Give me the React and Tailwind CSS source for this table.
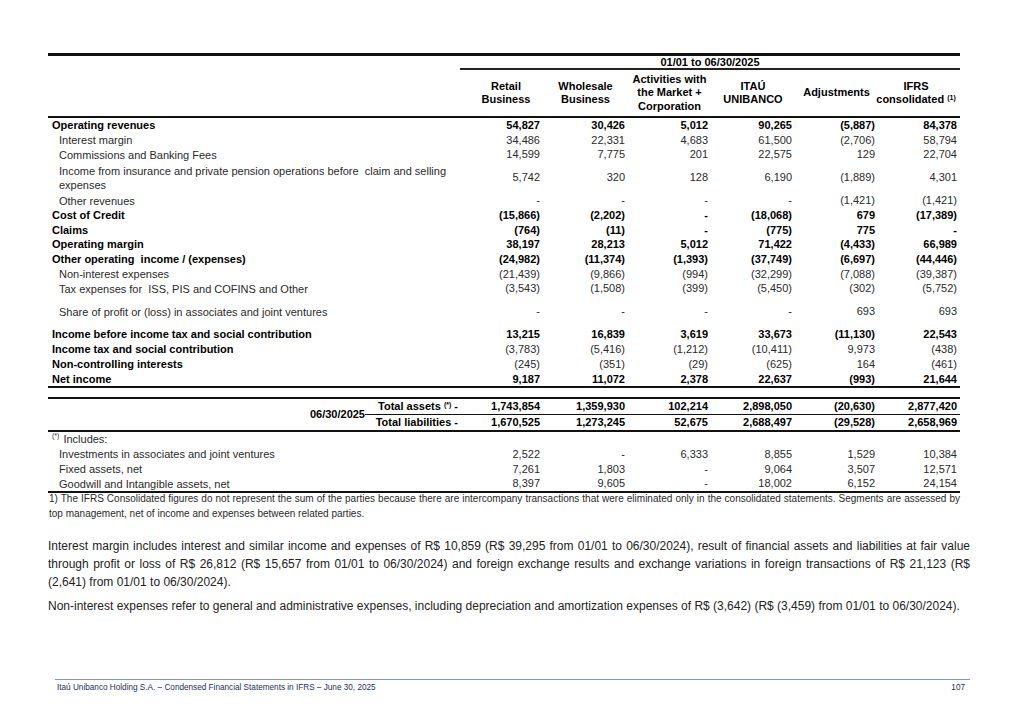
import React from "react";

const G = "grid grid-cols-[412px_83px_85px_83px_84px_83px_82px]";
const G2 = "grid grid-cols-[95px_83px_85px_83px_84px_83px_82px]";

const rows = [
  { l: "Operating revenues", b: true, v: ["54,827", "30,426", "5,012", "90,265", "(5,887)", "84,378"] },
  { l: "Interest margin", v: ["34,486", "22,331", "4,683", "61,500", "(2,706)", "58,794"] },
  { l: "Commissions and Banking Fees", v: ["14,599", "7,775", "201", "22,575", "129", "22,704"] },
  {
    l: (
      <>
        Income from insurance and private pension operations before&nbsp; claim and selling
        <br />
        expenses
      </>
    ),
    tall: true,
    v: ["5,742", "320", "128", "6,190", "(1,889)", "4,301"],
  },
  { l: "Other revenues", v: ["-", "-", "-", "-", "(1,421)", "(1,421)"] },
  { l: "Cost of Credit", b: true, v: ["(15,866)", "(2,202)", "-", "(18,068)", "679", "(17,389)"] },
  { l: "Claims", b: true, v: ["(764)", "(11)", "-", "(775)", "775", "-"] },
  { l: "Operating margin", b: true, v: ["38,197", "28,213", "5,012", "71,422", "(4,433)", "66,989"] },
  { l: "Other operating\u00a0 income / (expenses)", b: true, v: ["(24,982)", "(11,374)", "(1,393)", "(37,749)", "(6,697)", "(44,446)"] },
  { l: "Non-interest expenses", v: ["(21,439)", "(9,866)", "(994)", "(32,299)", "(7,088)", "(39,387)"] },
  { l: "Tax expenses for\u00a0 ISS, PIS and COFINS and Other", v: ["(3,543)", "(1,508)", "(399)", "(5,450)", "(302)", "(5,752)"] },
  { l: "Share of profit or (loss) in associates and joint ventures", tall: true, v: ["-", "-", "-", "-", "693", "693"] },
  { l: "Income before income tax and social contribution", b: true, v: ["13,215", "16,839", "3,619", "33,673", "(11,130)", "22,543"] },
  { l: "Income tax and social contribution", b: true, nb: true, v: ["(3,783)", "(5,416)", "(1,212)", "(10,411)", "9,973", "(438)"] },
  { l: "Non-controlling interests", b: true, nb: true, v: ["(245)", "(351)", "(29)", "(625)", "164", "(461)"] },
  { l: "Net income", b: true, v: ["9,187", "11,072", "2,378", "22,637", "(993)", "21,644"] },
];

const includes = [
  { l: "Investments in associates and joint ventures", v: ["2,522", "-", "6,333", "8,855", "1,529", "10,384"] },
  { l: "Fixed assets, net", v: ["7,261", "1,803", "-", "9,064", "3,507", "12,571"] },
  { l: "Goodwill and Intangible assets, net", v: ["8,397", "9,605", "-", "18,002", "6,152", "24,154"] },
];

function Row({ r }) {
  const h = r.tall ? "h-[31.3px]" : "h-[14.7px]";
  const labelCls = r.b ? "pl-[4px] font-bold text-black" : "pl-[11px] leading-[14px]";
  const numCls = r.b && !r.nb ? "font-bold text-black" : "";
  return (
    <div className={`${G} ${h} items-center`}>
      <div className={labelCls}>{r.l}</div>
      {r.v.map((x, i) => (
        <div key={i} className={`text-right pr-[3px] ${numCls}`}>
          {x}
        </div>
      ))}
    </div>
  );
}

export default function App() {
  return (
    <div className="w-[1019px] h-[720px] bg-white flex flex-col overflow-hidden font-['Liberation_Sans',Arial,sans-serif] text-[#2a2a2a]">
      <div className="pt-[53px] pl-[48px] text-[11px] leading-[14.7px]">
        <div className="w-[912px]">
          <div className="h-[3px] bg-[#111]" />
          <div className="grid grid-cols-[412px_500px]">
            <div />
            <div className="h-[14px] leading-[12px] border-b-2 border-[#222] text-center font-bold text-black">
              01/01 to 06/30/2025
            </div>
          </div>
          <div className={`${G} h-[48px] items-center border-b-2 border-[#111] font-bold text-black leading-[13.5px] text-center`}>
            <div />
            <div className="pl-[9px]">
              Retail
              <br />
              Business
            </div>
            <div>
              Wholesale
              <br />
              Business
            </div>
            <div>
              Activities with
              <br />
              the Market +
              <br />
              Corporation
            </div>
            <div>
              ITAÚ
              <br />
              UNIBANCO
            </div>
            <div>Adjustments</div>
            <div className="whitespace-nowrap -ml-[6px]">
              IFRS
              <br />
              consolidated <sup className="text-[7px]">(1)</sup>
            </div>
          </div>

          {rows.map((r, i) => (
            <Row key={i} r={r} />
          ))}

          <div className="h-[2px] bg-[#111]" />
          <div className="h-[9px]" />
          <div className="h-[2px] bg-[#111]" />

          <div className="flex font-bold text-black">
            <div className="w-[317px] flex items-center justify-end">06/30/2025</div>
            <div className="w-[595px]">
              <div className={`${G2} h-[16px] items-center border-b border-[#111]`}>
                <div className="text-right pr-[2px]">
                  Total assets <sup className="text-[7px]">(*)</sup> -
                </div>
                {["1,743,854", "1,359,930", "102,214", "2,898,050", "(20,630)", "2,877,420"].map((x, i) => (
                  <div key={i} className="text-right pr-[3px]">
                    {x}
                  </div>
                ))}
              </div>
              <div className={`${G2} h-[15px] items-center`}>
                <div className="text-right pr-[2px]">Total liabilities -</div>
                {["1,670,525", "1,273,245", "52,675", "2,688,497", "(29,528)", "2,658,969"].map((x, i) => (
                  <div key={i} className="text-right pr-[3px]">
                    {x}
                  </div>
                ))}
              </div>
            </div>
          </div>
          <div className="h-[2px] bg-[#111]" />

          <div className="h-[14.7px] flex items-center pl-[4px]">
            <sup className="text-[7px] mr-[4px]">(*)</sup>
            <span>Includes:</span>
          </div>
          {includes.map((r, i) => (
            <Row key={i} r={r} />
          ))}
          <div className="h-[2px] bg-[#111]" />

          <div className="-mt-[2px] pl-[1px] w-[912px] text-[10px] leading-[15px] text-[#2a2a2a]">
            <div className="whitespace-nowrap text-justify [text-align-last:justify]">
              1) The IFRS Consolidated figures do not represent the sum of the parties because there are intercompany transactions that were eliminated only in the consolidated statements. Segments are assessed by
            </div>
            <div className="whitespace-nowrap">top management, net of income and expenses between related parties.</div>
          </div>
        </div>

        <div className="mt-[16px] w-[922px] text-[12px] leading-[18px] text-[#222]">
          <div className="whitespace-nowrap text-justify [text-align-last:justify]">
            Interest margin includes interest and similar income and expenses of R$ 10,859 (R$ 39,295 from 01/01 to 06/30/2024), result of financial assets and liabilities at fair value
          </div>
          <div className="whitespace-nowrap text-justify [text-align-last:justify]">
            through profit or loss of R$ 26,812 (R$ 15,657 from 01/01 to 06/30/2024) and foreign exchange results and exchange variations in foreign transactions of R$ 21,123 (R$
          </div>
          <div className="whitespace-nowrap">(2,641) from 01/01 to 06/30/2024).</div>
          <div className="mt-[6px] whitespace-nowrap">
            Non-interest expenses refer to general and administrative expenses, including depreciation and amortization expenses of R$ (3,642) (R$ (3,459) from 01/01 to 06/30/2024).
          </div>
        </div>
      </div>

      <div className="mt-auto mb-[26px] ml-[55px] w-[915px] border-t border-[#8596b8] pt-[2px] flex justify-between text-[8.2px] leading-[12px] text-[#1c2f63]">
        <span className="pl-[2px]">Itaú Unibanco Holding S.A. – Condensed Financial Statements in IFRS – June 30, 2025</span>
        <span className="pr-[5px]">107</span>
      </div>
    </div>
  );
}
